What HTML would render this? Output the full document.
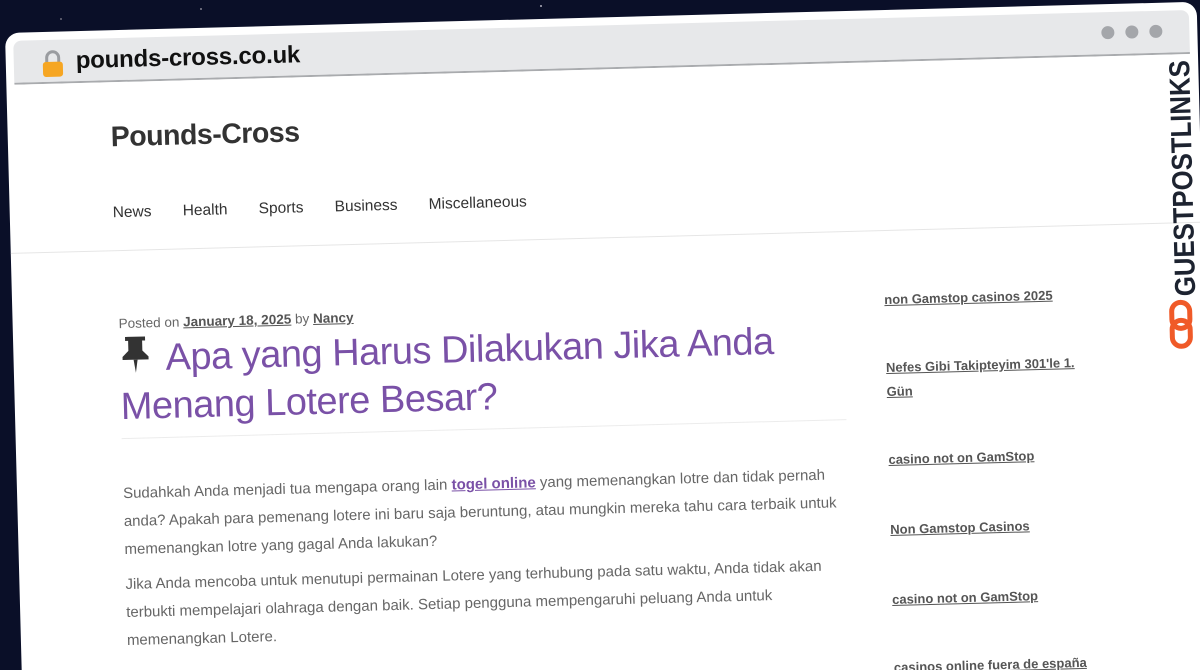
<!DOCTYPE html>
<html><head><meta charset="utf-8"><style>
html,body{margin:0;padding:0;width:1200px;height:670px;overflow:hidden;background:#0a0f28;font-family:"Liberation Sans",sans-serif}
.wrap{position:relative;width:1200px;height:670px;overflow:hidden}
.win{position:absolute;left:5px;top:33px;width:1192px;height:680px;background:#fff;border-radius:14px;transform-origin:0 0;transform:rotate(-1.5deg);overflow:hidden}
.bar{position:absolute;left:8px;top:8px;right:8px;height:42px;background:#e7e8ea;border-radius:8px 8px 0 0;border-bottom:2px solid #a9abae}
.url{position:absolute;left:62px;top:8px;font-family:"Liberation Sans",sans-serif;font-size:24px;color:#111;font-weight:bold;letter-spacing:-0.2px}
.lock{position:absolute;left:28px;top:10px}
.dot{position:absolute;top:14px;width:13px;height:13px;border-radius:50%;background:#a4a6aa}
.a{position:absolute;color:#333}
.title{left:103px;top:91px;font-size:28.5px;font-weight:bold;letter-spacing:-0.5px}
.nav{top:174px;font-size:15.5px}
.hline{position:absolute;left:0;right:0;top:220px;border-top:1px solid #e6e6e6}
.meta{left:106px;top:286px;font-size:13.5px;color:#666}
.meta a{color:#555;font-weight:bold;text-decoration:underline}
h1{position:absolute;left:106px;top:305px;margin:0;width:720px;font-weight:normal;font-size:38px;line-height:48px;color:#7a51a7;letter-spacing:-0.5px}
.sep{position:absolute;left:106px;top:408px;width:725px;border-top:1px solid #ececec}
p{position:absolute;left:106px;width:730px;margin:0;font-size:15px;line-height:28px;color:#666}
p a{color:#7a51a7;font-weight:bold;text-decoration:underline}
.side{position:absolute;left:872px;font-size:13px;font-weight:bold;color:#555;text-decoration:underline;line-height:24px;width:200px}
.logo{position:absolute;left:1150px;top:46px;width:40px;height:320px}
</style></head><body><div class="wrap">
<div style="position:absolute;left:200px;top:8px;width:2px;height:2px;background:#667"></div>
<div style="position:absolute;left:540px;top:5px;width:2px;height:2px;background:#889"></div>
<div style="position:absolute;left:820px;top:12px;width:2px;height:2px;background:#556"></div>
<div style="position:absolute;left:60px;top:18px;width:2px;height:2px;background:#556"></div>
<div class="win">
<div class="bar">
<svg class="lock" width="22" height="28" viewBox="0 0 22 28"><path d="M5 13V8a6 6 0 0 1 12 0v5" fill="none" stroke="#9a9ca0" stroke-width="3"/><rect x="1" y="12" width="20" height="15" rx="3" fill="#f6a623"/></svg>
<div class="url">pounds-cross.co.uk</div>
<div class="dot" style="left:1088px"></div><div class="dot" style="left:1112px"></div><div class="dot" style="left:1136px"></div>
</div>
<div class="a title">Pounds-Cross</div>
<div class="a nav" style="left:103px">News</div>
<div class="a nav" style="left:173px">Health</div>
<div class="a nav" style="left:249px">Sports</div>
<div class="a nav" style="left:325px">Business</div>
<div class="a nav" style="left:419px">Miscellaneous</div>
<div class="hline"></div>
<div class="a meta">Posted on <a>January 18, 2025</a> by <a>Nancy</a></div>
<h1><svg width="32" height="40" viewBox="0 0 32 40" style="vertical-align:-4px;margin-right:14px"><path d="M6 2h20v4h-3v10l6 6v3H3v-3l6-6V6H6z" fill="#333"/><path d="M14 25h4l-2 13z" fill="#333"/></svg>Apa yang Harus Dilakukan Jika Anda Menang Lotere Besar?</h1>
<div class="sep"></div>
<p style="top:450px">Sudahkah Anda menjadi tua mengapa orang lain <a>togel online</a> yang memenangkan lotre dan tidak pernah anda? Apakah para pemenang lotere ini baru saja beruntung, atau mungkin mereka tahu cara terbaik untuk memenangkan lotre yang gagal Anda lakukan?</p>
<p style="top:541px">Jika Anda mencoba untuk menutupi permainan Lotere yang terhubung pada satu waktu, Anda tidak akan terbukti mempelajari olahraga dengan baik. Setiap pengguna mempengaruhi peluang Anda untuk memenangkan Lotere.</p>
<div class="side" style="top:278px">non Gamstop casinos 2025</div>
<div class="side" style="top:346px">Nefes Gibi Takipteyim 301'le 1. Gün</div>
<div class="side" style="top:438px">casino not on GamStop</div>
<div class="side" style="top:508px">Non Gamstop Casinos</div>
<div class="side" style="top:578px">casino not on GamStop</div>
<div class="side" style="top:646px">casinos online fuera de españa</div>
<div class="logo">
<svg width="40" height="320" viewBox="0 0 40 320">
<text x="0" y="0" transform="translate(33,248) rotate(-90)" font-family="Liberation Sans,sans-serif" font-weight="bold" font-size="29" fill="#1d2330" textLength="236" lengthAdjust="spacingAndGlyphs">GUESTPOSTLINKS</text>
<g fill="none" stroke="#f05a28" stroke-width="5"><rect x="9" y="254" width="18" height="26" rx="9"/><rect x="9" y="272" width="18" height="26" rx="9"/></g>
</svg>
</div>
</div>
</div></body></html>
